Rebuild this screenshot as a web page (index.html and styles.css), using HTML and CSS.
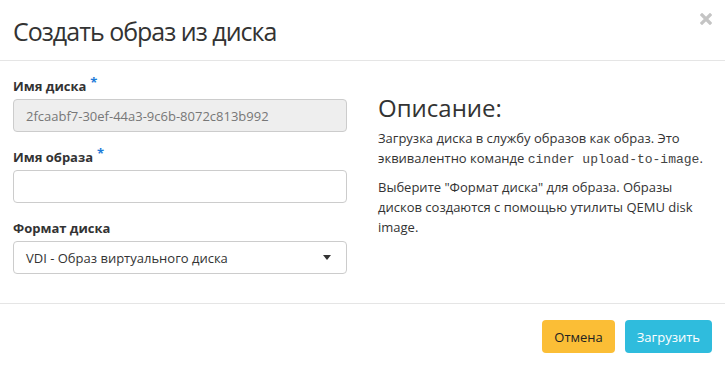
FILE: index.html
```html
<html>
  <head>
    <title>Создать образ из диска</title>
    <link rel="stylesheet" href="styles.css">
  </head>
  <body>
    <div class="modal">
      <header class="modal-header">
        <h1>Создать образ из диска</h1>
        <svg class="close" width="12" height="12" viewBox="0 0 12 12">
          <path d="M2 2 L10 10 M10 2 L2 10" stroke="#c4c4c4" stroke-width="3.2" stroke-linecap="square" />
        </svg>
      </header>
      <main class="modal-body">
        <section class="form">
          <div class="field">
            <label>Имя диска<span class="req">*</span></label>
            <input class="control readonly" type="text" value="2fcaabf7-30ef-44a3-9c6b-8072c813b992" readonly>
          </div>
          <div class="field">
            <label>Имя образа<span class="req">*</span></label>
            <input class="control" type="text">
          </div>
          <div class="field">
            <label>Формат диска</label>
            <div class="control select">
              <span>VDI - Образ виртуального диска</span>
              <span class="caret"></span>
            </div>
          </div>
        </section>
        <section class="help">
          <h2>Описание:</h2>
          <p>Загрузка диска в службу образов как образ. Это эквивалентно команде <code>cinder upload-to-image</code>.</p>
          <p>Выберите "Формат диска" для образа. Образы дисков создаются с помощью утилиты QEMU disk image.</p>
        </section>
      </main>
      <footer class="modal-footer">
        <button class="btn cancel">Отмена</button>
        <button class="btn submit">Загрузить</button>
      </footer>
    </div>
  </body>
</html>
```

FILE: styles.css
```css
html,
body {
  margin: 0;
  padding: 0;
  font-family: "Open Sans", sans-serif;
  background: #fff;
  color: #333;
}

.modal {
  width: 725px;
  height: 365px;
  display: flex;
  flex-direction: column;
}

.modal-header {
  height: 61px;
  flex: none;
  box-sizing: border-box;
  border-bottom: 1px solid #e5e5e5;
  display: flex;
  justify-content: space-between;
  align-items: flex-start;
  padding: 13px 13px 0;
}

.modal-header h1 {
  margin: 0;
  font-size: 25px;
  line-height: 36px;
  font-weight: 400;
  letter-spacing: -1px;
  color: #333;
}

.close {
  margin-top: 0;
}

.modal-body {
  flex: none;
  display: flex;
  gap: 31px;
  padding: 16px 13px 0;
  height: 243px;
  box-sizing: border-box;
  border-bottom: 1px solid #e5e5e5;
}

.form {
  width: 334px;
  flex: none;
}

.field {
  margin-bottom: 16px;
}

label {
  display: block;
  font-size: 13px;
  font-weight: 700;
  margin-bottom: 4px;
  line-height: 18px;
}

.req {
  color: #1e7bd8;
  font-size: 13px;
  line-height: 0;
  vertical-align: 4px;
  margin-left: 4px;
}

.control {
  display: block;
  width: 100%;
  height: 33px;
  box-sizing: border-box;
  border: 1px solid #ccc;
  border-radius: 4px;
  padding: 0 12px;
  font-family: "Open Sans", sans-serif;
  font-size: 13px;
  color: #333;
  background: #fff;
}

.readonly {
  background: #eee;
  color: #777;
}

.select {
  display: flex;
  justify-content: space-between;
  align-items: center;
}

.caret {
  width: 0;
  height: 0;
  border-left: 4px solid transparent;
  border-right: 4px solid transparent;
  border-top: 5px solid #333;
  margin-right: 3px;
}

.help {
  flex: 1;
  padding: 16px 4px 0 0;
}

.help h2 {
  margin: 0 0 5px;
  font-size: 24px;
  line-height: 30px;
  font-weight: 400;
  color: #333;
}

.help p {
  margin: 0 0 9px;
  font-size: 13px;
  line-height: 20px;
}

code {
  font-family: "Liberation Mono", monospace;
  font-size: 13px;
  line-height: 1;
  color: #444;
}

.modal-footer {
  flex: 1;
  display: flex;
  justify-content: flex-end;
  align-items: flex-start;
  gap: 10px;
  padding: 16px 13px 0;
}

.btn {
  height: 33px;
  border: none;
  border-radius: 4px;
  padding: 0 12px;
  font-family: "Open Sans", sans-serif;
  font-size: 13px;
}

.cancel {
  background: #fbbe36;
  color: #222;
}

.submit {
  background: #2fbcdd;
  color: #fff;
}
```
